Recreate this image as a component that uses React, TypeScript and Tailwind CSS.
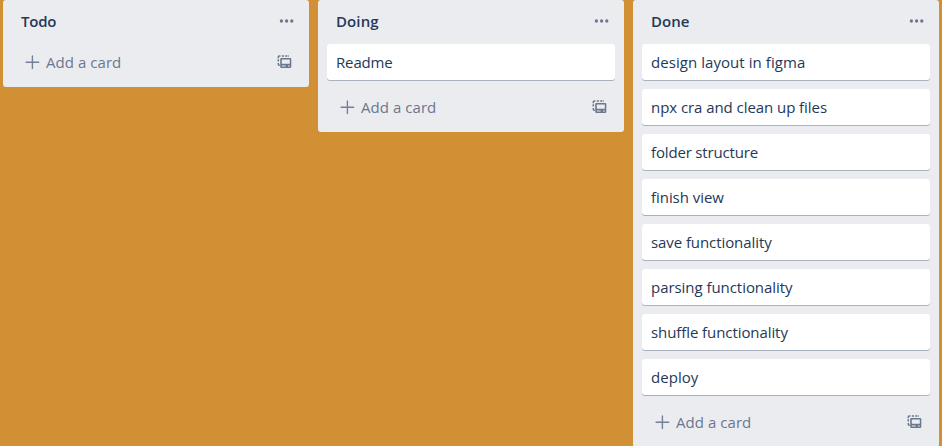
type Card = { text: string; tracking: string };
type List = { title: string; tracking: string; cards: Card[] };

const lists: List[] = [
  { title: 'Todo', tracking: 'tracking-[-0.2px]', cards: [] },
  {
    title: 'Doing',
    tracking: 'tracking-[0.1px]',
    cards: [{ text: 'Readme', tracking: 'tracking-[-0.15px]' }],
  },
  {
    title: 'Done',
    tracking: 'tracking-[0.05px]',
    cards: [
      { text: 'design layout in figma', tracking: 'tracking-[0.06px]' },
      { text: 'npx cra and clean up files', tracking: 'tracking-[-0.06px]' },
      { text: 'folder structure', tracking: 'tracking-[-0.16px]' },
      { text: 'finish view', tracking: 'tracking-[-0.05px]' },
      { text: 'save functionality', tracking: 'tracking-[-0.08px]' },
      { text: 'parsing functionality', tracking: 'tracking-[-0.05px]' },
      { text: 'shuffle functionality', tracking: 'tracking-[-0.08px]' },
      { text: 'deploy', tracking: 'tracking-[0.05px]' },
    ],
  },
];

function DotsIcon() {
  return (
    <svg className="h-4 w-4" viewBox="0 0 16 16" fill="#6b778c">
      <circle cx="2.4" cy="8" r="1.65" />
      <circle cx="7.6" cy="8" r="1.65" />
      <circle cx="12.8" cy="8" r="1.65" />
    </svg>
  );
}

function PlusIcon() {
  return (
    <svg className="h-4 w-4" viewBox="0 0 16 16" stroke="#72809a" strokeWidth="1.4" strokeLinecap="round">
      <path d="M8.4 1.9v12.6M2.1 8.2h12.6" />
    </svg>
  );
}

function TemplateIcon() {
  return (
    <svg className="h-4 w-4" viewBox="0 0 16 16" fill="none">
      <path
        d="M1.3 4.2V3Q1.3 2 2.3 2H3.4M4.8 2H7M8.2 2H10.4M11.3 2H12M1.3 5.3V7.6M1.3 8.9V10.2Q1.3 11.2 2.3 11.2H2.8"
        stroke="#6b778c"
        strokeWidth="1.5"
      />
      <path
        fillRule="evenodd"
        fill="#6b778c"
        d="M4.4 3.9H13.1Q14.3 3.9 14.3 5.1V12.8Q14.3 14 13.1 14H4.4Q3.2 14 3.2 12.8V5.1Q3.2 3.9 4.4 3.9ZM4.8 5.5V9.8H12.8V5.5ZM4.8 11.5V12.5H8.6V11.5ZM11 11.5V12.5H12.8V11.5Z"
      />
    </svg>
  );
}

function ListColumn({ list }: { list: List }) {
  return (
    <section className="w-[306px] shrink-0 rounded-[3px] bg-[#ebecf0]">
      <header className="flex h-11 items-center justify-between pr-3.5 pl-[18px]">
        <h2 className={`mb-0.5 text-[15px] leading-[22px] font-semibold text-[#253858] ${list.tracking}`}>{list.title}</h2>
        <button className="mb-0.5" aria-label="List actions">
          <DotsIcon />
        </button>
      </header>
      {list.cards.length > 0 && (
        <ul className="flex flex-col gap-[9px] px-[9px] pb-[9px]">
          {list.cards.map((card) => (
            <li
              key={card.text}
              className={`flex h-9 items-center rounded-[3px] bg-white px-[9px] text-[15px] leading-[22px] text-[#253858] shadow-[0_1px_0_#aab2c0] ${card.tracking}`}
            >
              {card.text}
            </li>
          ))}
        </ul>
      )}
      <footer className="flex h-[43px] items-start justify-between pr-4 pl-[21px]">
        <button className="flex h-9 items-center gap-1.5 text-[15px] leading-[22px] tracking-[0.05px] text-[#6b778f]">
          <PlusIcon />
          <span>Add a card</span>
        </button>
        <button className="flex h-9 items-center" aria-label="Create from template">
          <TemplateIcon />
        </button>
      </footer>
    </section>
  );
}

export default function App() {
  return (
    <main className="flex h-[446px] w-[942px] items-start gap-[9px] overflow-hidden bg-[#d29034] pl-[3px] font-['Open_Sans','Noto_Sans',sans-serif]">
      {lists.map((list) => (
        <ListColumn key={list.title} list={list} />
      ))}
    </main>
  );
}
